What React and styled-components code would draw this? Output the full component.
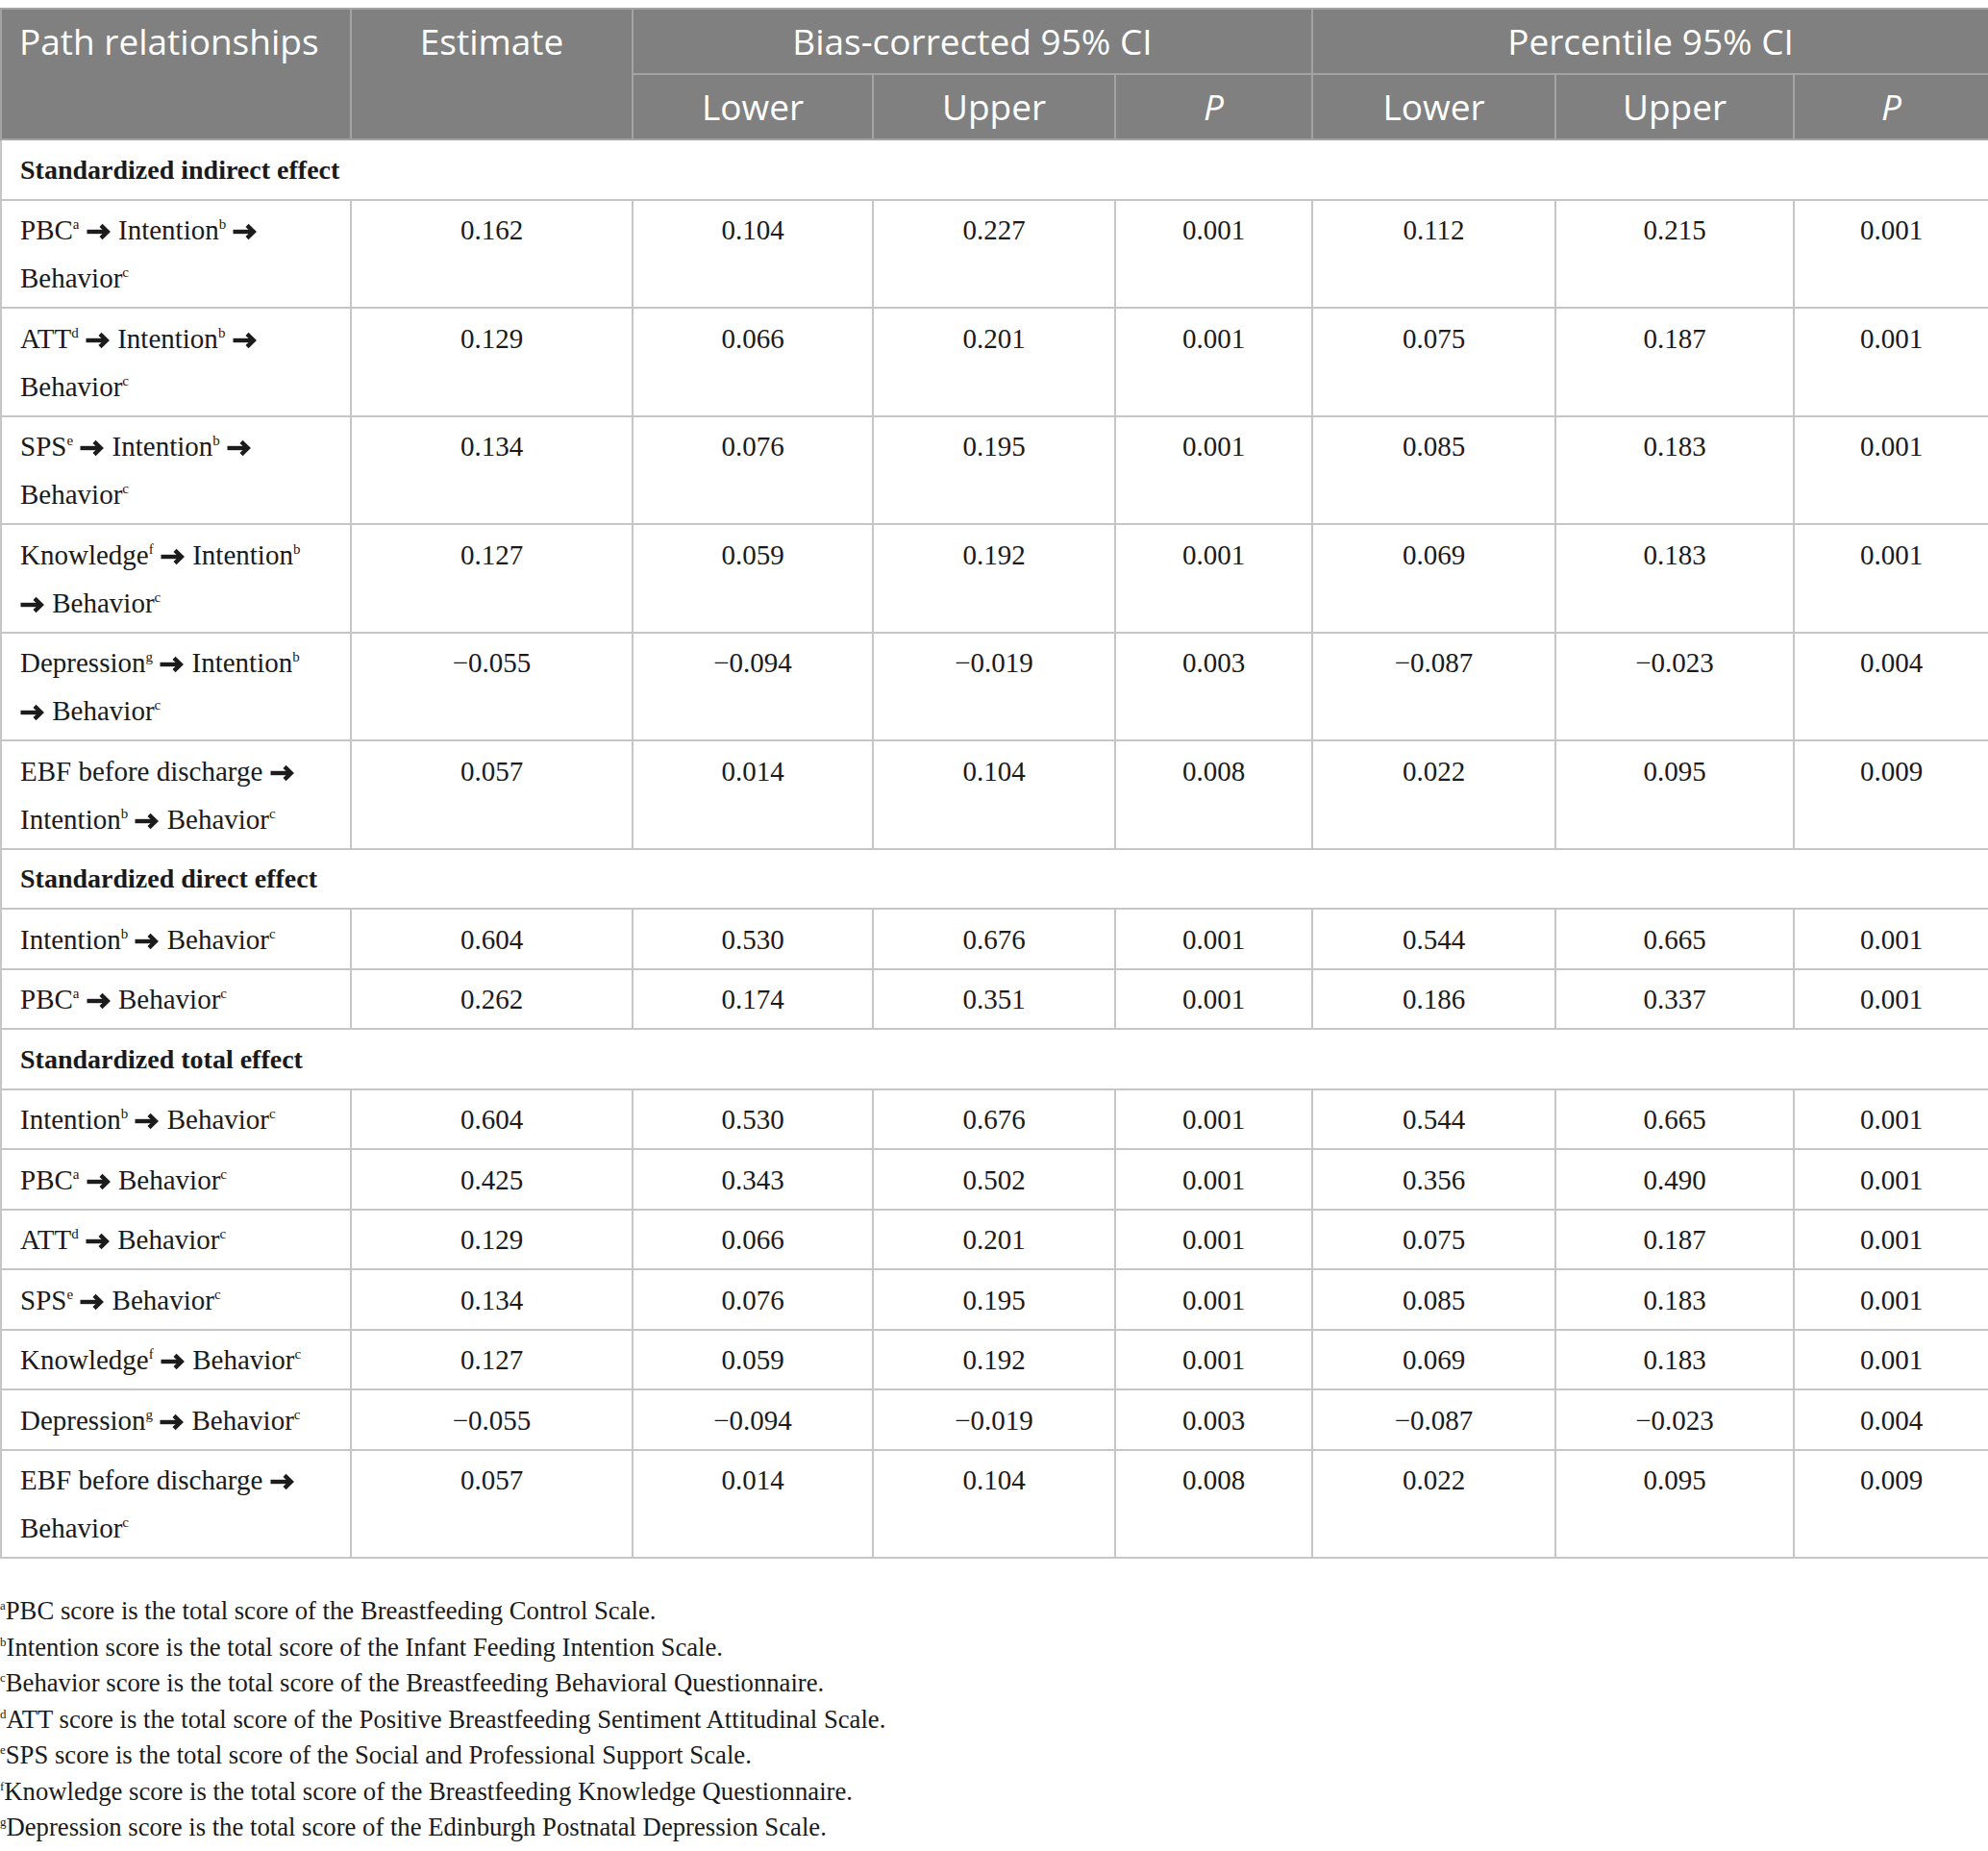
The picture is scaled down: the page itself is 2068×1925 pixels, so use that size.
import styled, { createGlobalStyle } from 'styled-components';

const GlobalStyle = createGlobalStyle`
    html, body {
        margin: 0;
        padding: 0;
        background: #ffffff;
        overflow: hidden;
    }
`;

const N = (label, sup) => ({ label, sup });
const PBC = N('PBC', 'a');
const INT = N('Intention', 'b');
const BEH = N('Behavior', 'c');
const ATT = N('ATT', 'd');
const SPS = N('SPS', 'e');
const KNO = N('Knowledge', 'f');
const DEP = N('Depression', 'g');
const EBF = N('EBF before discharge', '');

const sections = [
    {
        title: 'Standardized indirect effect',
        rows: [
            { path: [PBC, INT, BEH], values: ['0.162', '0.104', '0.227', '0.001', '0.112', '0.215', '0.001'] },
            { path: [ATT, INT, BEH], values: ['0.129', '0.066', '0.201', '0.001', '0.075', '0.187', '0.001'] },
            { path: [SPS, INT, BEH], values: ['0.134', '0.076', '0.195', '0.001', '0.085', '0.183', '0.001'] },
            { path: [KNO, INT, BEH], values: ['0.127', '0.059', '0.192', '0.001', '0.069', '0.183', '0.001'] },
            { path: [DEP, INT, BEH], values: ['−0.055', '−0.094', '−0.019', '0.003', '−0.087', '−0.023', '0.004'] },
            { path: [EBF, INT, BEH], values: ['0.057', '0.014', '0.104', '0.008', '0.022', '0.095', '0.009'] },
        ],
    },
    {
        title: 'Standardized direct effect',
        rows: [
            { path: [INT, BEH], values: ['0.604', '0.530', '0.676', '0.001', '0.544', '0.665', '0.001'] },
            { path: [PBC, BEH], values: ['0.262', '0.174', '0.351', '0.001', '0.186', '0.337', '0.001'] },
        ],
    },
    {
        title: 'Standardized total effect',
        rows: [
            { path: [INT, BEH], values: ['0.604', '0.530', '0.676', '0.001', '0.544', '0.665', '0.001'] },
            { path: [PBC, BEH], values: ['0.425', '0.343', '0.502', '0.001', '0.356', '0.490', '0.001'] },
            { path: [ATT, BEH], values: ['0.129', '0.066', '0.201', '0.001', '0.075', '0.187', '0.001'] },
            { path: [SPS, BEH], values: ['0.134', '0.076', '0.195', '0.001', '0.085', '0.183', '0.001'] },
            { path: [KNO, BEH], values: ['0.127', '0.059', '0.192', '0.001', '0.069', '0.183', '0.001'] },
            { path: [DEP, BEH], values: ['−0.055', '−0.094', '−0.019', '0.003', '−0.087', '−0.023', '0.004'] },
            { path: [EBF, BEH], values: ['0.057', '0.014', '0.104', '0.008', '0.022', '0.095', '0.009'] },
        ],
    },
];

const notes = [
    ['a', 'PBC score is the total score of the Breastfeeding Control Scale.'],
    ['b', 'Intention score is the total score of the Infant Feeding Intention Scale.'],
    ['c', 'Behavior score is the total score of the Breastfeeding Behavioral Questionnaire.'],
    ['d', 'ATT score is the total score of the Positive Breastfeeding Sentiment Attitudinal Scale.'],
    ['e', 'SPS score is the total score of the Social and Professional Support Scale.'],
    ['f', 'Knowledge score is the total score of the Breastfeeding Knowledge Questionnaire.'],
    ['g', 'Depression score is the total score of the Edinburgh Postnatal Depression Scale.'],
];

const colWidths = [364, 293, 250, 252, 205, 253, 248, 203];

// heavy right arrow (➔) drawn, the fallback glyph is too thin
function ArrowIcon() {
    return (
        <Arrow viewBox="0 0 26 18" aria-label="➔">
            <path d="M0.5 9 H21" stroke="#1c1c1c" strokeWidth="4.4" fill="none" />
            <path d="M15 2.4 L21.8 9 L15 15.6" stroke="#1c1c1c" strokeWidth="4.4" fill="none" strokeLinejoin="miter" />
        </Arrow>
    );
}

function PathLabel({ path }) {
    return path.map((node, i) => (
        <span key={i}>
            {i > 0 && <> <ArrowIcon /> </>}
            {node.label}
            {node.sup && <Sup>{node.sup}</Sup>}
        </span>
    ));
}

export default function App() {
    return (
        <Page>
            <GlobalStyle />
            <Table>
                <colgroup>
                    {colWidths.map((w, i) => <col key={i} style={{ width: w }} />)}
                </colgroup>
                <thead>
                    <tr>
                        <Th rowSpan={2} align="left">Path relationships</Th>
                        <Th rowSpan={2}>Estimate</Th>
                        <Th colSpan={3}>Bias-corrected 95% CI</Th>
                        <Th colSpan={3}>Percentile 95% CI</Th>
                    </tr>
                    <tr>
                        <Th>Lower</Th>
                        <Th>Upper</Th>
                        <Th><em>P</em></Th>
                        <Th>Lower</Th>
                        <Th>Upper</Th>
                        <Th><em>P</em></Th>
                    </tr>
                </thead>
                <tbody>
                    {sections.map(section => (
                        <Section key={section.title} section={section} />
                    ))}
                </tbody>
            </Table>

            <Notes>
                {notes.map(([mark, text]) => (
                    <Note key={mark}><NoteMark>{mark}</NoteMark>{text}</Note>
                ))}
            </Notes>
        </Page>
    );
}

function Section({ section }) {
    return (
        <>
            <tr>
                <SectionCell colSpan={8}>{section.title}</SectionCell>
            </tr>
            {section.rows.map((row, i) => (
                <tr key={i}>
                    <PathCell><PathLabel path={row.path} /></PathCell>
                    {row.values.map((v, j) => <Td key={j}>{v}</Td>)}
                </tr>
            ))}
        </>
    );
}

const Page = styled.div`
    padding-top: 8px;
    width: 2068px;
`;

const Table = styled.table`
    width: 2068px;
    table-layout: fixed;
    border-collapse: collapse;
    font-family: 'Liberation Serif', 'Times New Roman', serif;
    color: #1a1a1a;
`;

const Th = styled.th`
    background: #7f807f;
    color: #ffffff;
    border: 2px solid #a2a3a2;
    font-family: 'Open Sans', 'Noto Sans', sans-serif;
    font-weight: 400;
    font-size: 37px;
    line-height: 50px;
    padding: 8px 10px;
    padding-left: ${p => (p.align === 'left' ? '18px' : '10px')};
    text-align: ${p => p.align || 'center'};
    vertical-align: top;
    em {
        font-style: italic;
    }
`;

const Td = styled.td`
    border: 2px solid #c6c6c6;
    font-size: 29px;
    line-height: 50px;
    padding: 5.5px 10px 5px;
    text-align: center;
    vertical-align: top;
`;

const PathCell = styled(Td)`
    padding: 5.5px 28px 5px 19px;
    text-align: left;
`;

const SectionCell = styled.td`
    border: 2px solid #c6c6c6;
    font-size: 28px;
    font-weight: 700;
    line-height: 50px;
    padding: 5.5px 19px 5px;
    text-align: left;
`;

const Arrow = styled.svg`
    width: 26px;
    height: 18px;
    vertical-align: -1px;
`;

const Sup = styled.sup`
    font-size: 15px;
    line-height: 0;
    vertical-align: baseline;
    position: relative;
    top: -11px;
`;

const Notes = styled.div`
    margin-top: 36px;
    font-family: 'Liberation Serif', 'Times New Roman', serif;
    color: #1a1a1a;
`;

const Note = styled.div`
    font-size: 26.7px;
    line-height: 37.5px;
`;

const NoteMark = styled.sup`
    font-size: 13px;
    line-height: 0;
    vertical-align: baseline;
    position: relative;
    top: -10px;
`;
